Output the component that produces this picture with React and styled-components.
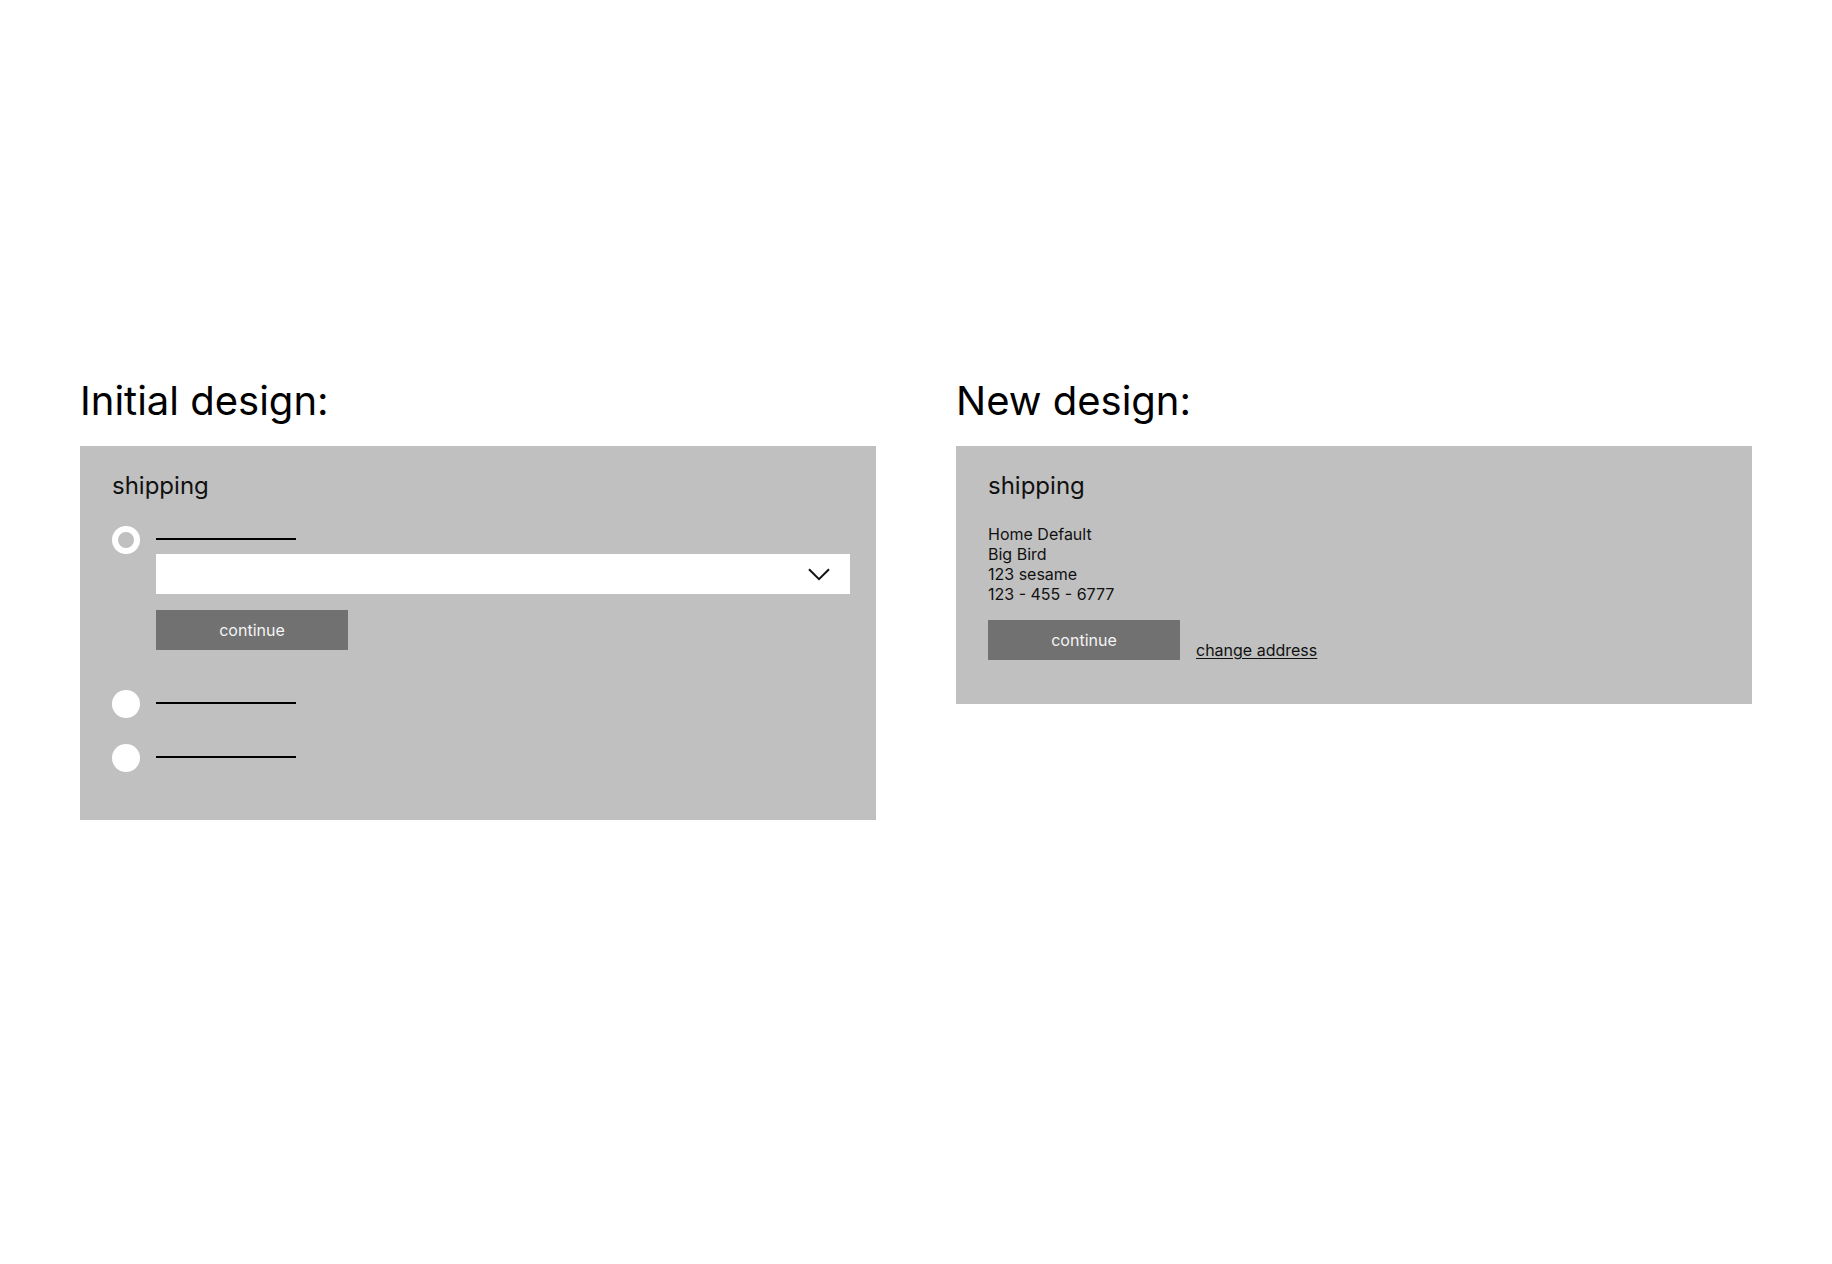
import React from "react";
import styled, { createGlobalStyle } from "styled-components";

const GlobalStyle = createGlobalStyle`
  body {
    margin: 0;
    background: #ffffff;
    font-family: Inter, "Noto Sans", sans-serif;
    color: #111;
  }
`;

const ChevronDown = () => (
  <svg width="22" height="13" viewBox="0 0 22 13" fill="none">
    <path d="M1 1.2 L11 11.2 L21 1.2" stroke="#111" strokeWidth="2" />
  </svg>
);

const App = () => {
  return (
    <>
      <GlobalStyle />
      <Page>
        <Column>
          <Heading>Initial design:</Heading>
          <Panel $pad="24px 26px 48px 32px">
            <Title>shipping</Title>
            <Options>
              <Option>
                <Radio $selected />
                <OptionBody>
                  <LabelRow>
                    <Line />
                  </LabelRow>
                  <Select>
                    <ChevronDown />
                  </Select>
                  <Button>continue</Button>
                </OptionBody>
              </Option>
              <Option $top="40px">
                <Radio />
                <LabelRow>
                  <Line />
                </LabelRow>
              </Option>
              <Option $top="26px">
                <Radio />
                <LabelRow>
                  <Line />
                </LabelRow>
              </Option>
            </Options>
          </Panel>
        </Column>
        <Column>
          <Heading>New design:</Heading>
          <Panel $pad="24px 32px 44px 32px">
            <Title>shipping</Title>
            <Address>
              <div>Home Default</div>
              <div>Big Bird</div>
              <div>123 sesame</div>
              <div>123 - 455 - 6777</div>
            </Address>
            <Actions>
              <Button>continue</Button>
              <Link href="#">change address</Link>
            </Actions>
          </Panel>
        </Column>
      </Page>
    </>
  );
};

const Page = styled.div`
  display: flex;
  gap: 80px;
  padding: 377px 0 0 80px;
`;

const Column = styled.div`
  display: flex;
  flex-direction: column;
  width: 796px;
`;

const Heading = styled.h1`
  margin: 0 0 21px 0;
  font-size: 40px;
  line-height: 48px;
  font-weight: 400;
  color: #000;
`;

const Panel = styled.div`
  background-color: #c0c0c0;
  padding: ${(p) => p.$pad};
  display: flex;
  flex-direction: column;
`;

const Title = styled.h2`
  margin: 0;
  font-size: 24px;
  line-height: 32px;
  font-weight: 400;
  color: #111;
`;

const Options = styled.div`
  display: flex;
  flex-direction: column;
  margin-top: 24px;
`;

const Option = styled.div`
  display: flex;
  gap: 16px;
  margin-top: ${(p) => p.$top || "0"};
`;

const Radio = styled.div`
  width: 28px;
  height: 28px;
  flex: none;
  box-sizing: border-box;
  border-radius: 50%;
  background-color: ${(p) => (p.$selected ? "#c0c0c0" : "#fff")};
  border: ${(p) => (p.$selected ? "6px solid #fff" : "none")};
`;

const OptionBody = styled.div`
  display: flex;
  flex-direction: column;
  flex: 1;
`;

const LabelRow = styled.div`
  height: 28px;
  display: flex;
  align-items: center;
`;

const Line = styled.div`
  width: 140px;
  height: 2px;
  margin-top: -2px;
  background-color: #000;
`;

const Select = styled.div`
  height: 40px;
  background-color: #fff;
  display: flex;
  align-items: center;
  justify-content: flex-end;
  padding-right: 20px;
  margin-bottom: 16px;
`;

const Button = styled.button`
  width: 192px;
  height: 40px;
  border: none;
  border-radius: 0;
  background-color: #717171;
  color: #f4f4f4;
  font-family: Inter, "Noto Sans", sans-serif;
  font-size: 16px;
  padding: 0;
  cursor: pointer;
`;

const Address = styled.div`
  margin-top: 22px;
  font-size: 16px;
  line-height: 20px;
  color: #111;
`;

const Actions = styled.div`
  display: flex;
  align-items: flex-end;
  gap: 16px;
  margin-top: 16px;
`;

const Link = styled.a`
  font-size: 16px;
  line-height: 20px;
  color: #111;
  text-decoration: underline;
  text-underline-offset: 2px;
`;

export default App;
